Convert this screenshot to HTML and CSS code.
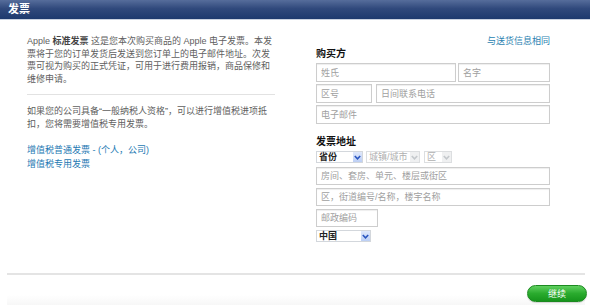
FILE: index.html
```html
<html>
<head>
<meta charset="utf-8">
<title>发票</title>
<link rel="stylesheet" href="styles.css">
</head>
<body>
<div class="hdder">
  <h2 class="hdderTitle">发票</h2>
</div>
<div class="main">
  <div class="intro">
    <p class="lead">Apple <b>标准发票</b> 这是您本次购买商品的 Apple 电子发票。本发<br>票将于您的订单发货后发送到您订单上的电子邮件地址。次发<br>票可视为购买的正式凭证，可用于进行费用报销，商品保修和<br>维修申请。</p>
    <div class="sep"></div>
    <p class="lead">如果您的公司具备“一般纳税人资格”，可以进行增值税进项抵<br>扣，您将需要增值税专用发票。</p>
    <ul class="links">
      <li><a href="#">增值税普通发票 - (个人，公司)</a></li>
      <li><a href="#">增值税专用发票</a></li>
    </ul>
  </div>
  <form class="buyer">
    <div class="same"><a href="#">与送货信息相同</a></div>
    <h3 class="secTitle">购买方</h3>
    <div class="row">
      <input class="fld wLast" placeholder="姓氏">
      <input class="fld wFirst" placeholder="名字">
    </div>
    <div class="row gap4">
      <input class="fld wArea" placeholder="区号">
      <input class="fld wPhone" placeholder="日间联系电话">
    </div>
    <div class="row">
      <input class="fld wFull" placeholder="电子邮件">
    </div>
    <h3 class="secTitle addr">发票地址</h3>
    <div class="row selRow">
      <div class="sel wProv"><span class="val">省份</span><span class="arr"><svg width="7" height="5" viewBox="0 0 7 5"><path d="M0.8 1 L3.5 3.8 L6.2 1" fill="none" stroke="#2a56c0" stroke-width="1.6"/></svg></span></div>
      <div class="sel off wCity"><span class="val">城镇/城市</span><span class="arr"><svg width="7" height="5" viewBox="0 0 7 5"><path d="M0.8 1 L3.5 3.8 L6.2 1" fill="none" stroke="#c4c8cc" stroke-width="1.6"/></svg></span></div>
      <div class="sel off wDist"><span class="val">区</span><span class="arr"><svg width="7" height="5" viewBox="0 0 7 5"><path d="M0.8 1 L3.5 3.8 L6.2 1" fill="none" stroke="#c4c8cc" stroke-width="1.6"/></svg></span></div>
    </div>
    <div class="row tight">
      <input class="fld short wFull" placeholder="房间、套房、单元、楼层或街区">
    </div>
    <div class="row tight">
      <input class="fld short wFull" placeholder="区，街道编号/名称，楼宇名称">
    </div>
    <div class="row tight">
      <input class="fld short wZip" placeholder="邮政编码">
    </div>
    <div class="row">
      <div class="sel wCountry"><span class="val">中国</span><span class="arr"><svg width="7" height="5" viewBox="0 0 7 5"><path d="M0.8 1 L3.5 3.8 L6.2 1" fill="none" stroke="#2a56c0" stroke-width="1.6"/></svg></span></div>
    </div>
  </form>
</div>
<div class="foot">
  <button type="button" class="btnGo">继续</button>
</div>
</body>
</html>
```

FILE: styles.css
```css
body{
margin:0;
font-family:"Liberation Sans","Noto Sans CJK SC",sans-serif;
font-size:9px;
color:#606060;
background:#fff;
}
.hdder{
height:19px;
background:linear-gradient(#566d9b,#30497c 45%,#1d3a6e);
border-bottom:1px solid #c9d2e0;
padding-left:8px;
}
.hdderTitle{
margin:0;
font-size:11px;
line-height:19px;
color:#fff;
font-weight:bold;
}
.main{
display:flex;
gap:41px;
height:238px;
padding:15px 0 0 27px;
}
.intro{
width:248px;
}
.lead{
margin:0;
line-height:12.5px;
white-space:nowrap;
}
.lead b{color:#444;}
.sep{
height:1px;
background:#e2e2e2;
margin:9px 0 10px 0;
}
.links{
list-style:none;
margin:14px 0 0 0;
padding:0;
line-height:13.5px;
}
.links a{color:#2479b3;text-decoration:none;}
.buyer{
width:234px;
margin:0;
}
.same{
text-align:right;
line-height:12px;
}
.same a{color:#2a7fb0;text-decoration:none;}
.secTitle{
margin:1px 0 3px 0;
font-size:10px;
line-height:12px;
color:#111;
font-weight:bold;
}
.secTitle.addr{margin:12px 0 3px 0;}
.row{
display:flex;
gap:2px;
margin-bottom:2px;
}
.row.gap4{gap:4px;}
.row.tight{margin-bottom:3px;}
.fld{
box-sizing:border-box;
height:19px;
border:1px solid #cdcdcd;
box-shadow:inset 0 1px 1px rgba(0,0,0,0.07);
padding:0 4px;
font-family:inherit;
font-size:9px;
color:#333;
outline:none;
}
.fld.short{height:18px;}
.fld::placeholder{color:#a0a0a0;}
.wLast{width:140px;}
.wFirst{width:92px;}
.wArea{width:56px;}
.wPhone{width:174px;}
.wFull{width:234px;}
.wZip{width:62px;}
.selRow{gap:3px;margin-bottom:4px;}
.sel{
box-sizing:border-box;
height:12px;
display:flex;
align-items:center;
justify-content:space-between;
border:1px solid #d3d7dc;
background:#fff;
color:#222;
font-weight:bold;
padding-left:2px;
}
.sel .val{line-height:10px;}
.sel .arr{
width:9px;
height:10px;
display:flex;
align-items:center;
justify-content:center;
background:linear-gradient(#dfe8fb,#bccff5);
}
.sel.off{
border-color:#dcdee0;
color:#b0b0b0;
font-weight:normal;
}
.sel.off .arr{background:#eff0f1;}
.wProv{width:47px;}
.wCity{width:54px;margin-right:1px;}
.wDist{width:28px;}
.wCountry{width:55px;}
.foot{
margin:0 5px 0 7px;
border-top:2px solid #e4e4e4;
height:30px;
display:flex;
justify-content:flex-end;
align-items:flex-start;
padding-top:10px;
background:linear-gradient(#fff 50%,#efefef);
}
.btnGo{
width:60px;
height:17px;
margin-right:-2px;
border-radius:9px;
border:1px solid #1c8a20;
background:linear-gradient(#5fd05f,#2aab2e 50%,#16951c);
color:#fff;
font-family:inherit;
font-size:9px;
padding:0;
box-shadow:0 1px 1px rgba(0,0,0,0.15);
}
```
